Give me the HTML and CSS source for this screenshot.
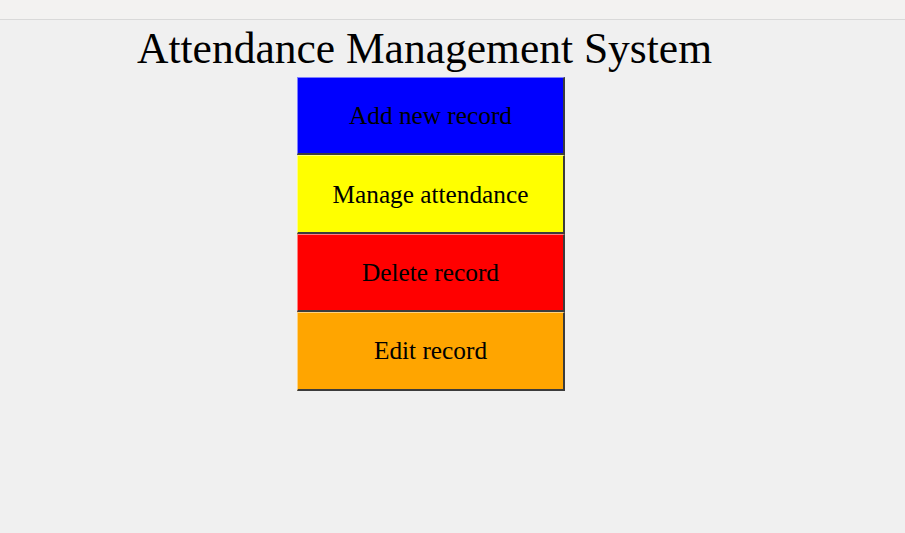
FILE: index.html
```html
<!DOCTYPE html>
<html lang="en">
<head>
<meta charset="utf-8">
<title>Attendance Management System</title>
<link rel="stylesheet" href="styles.css">
</head>
<body>
<div class="topbar"></div>
<main class="page">
  <h1 class="title">Attendance Management System</h1>
  <nav class="menu">
    <button class="btn btn-blue">Add new record</button>
    <button class="btn btn-yellow">Manage attendance</button>
    <button class="btn btn-red">Delete record</button>
    <button class="btn btn-orange">Edit record</button>
  </nav>
</main>
</body>
</html>
```
FILE: styles.css
```css
html, body {
  margin: 0;
  padding: 0;
  background: #f0f0f0;
  font-family: "Liberation Serif", "Times New Roman", serif;
  color: #000;
}

.topbar {
  height: 19px;
  background: #f3f2f1;
  border-bottom: 1px solid #d9d9d9;
}

.page {
  display: flex;
  flex-direction: column;
  align-items: flex-start;
  padding: 3px 0 0 137px;
}

.title {
  margin: 0 0 4px 0;
  font-size: 43.5px;
  font-weight: normal;
  line-height: 50px;
}

.menu {
  display: flex;
  flex-direction: column;
  margin-left: 160px;
}

.btn {
  box-sizing: border-box;
  width: 268px;
  height: 78.4px;
  margin: 0;
  padding: 0;
  font-family: "Liberation Serif", "Times New Roman", serif;
  font-size: 25.3px;
  color: #000;
  border-style: solid;
  border-width: 1px 2px 2px 1px;
  border-right-color: #3c3c3c;
  border-bottom-color: #3c3c3c;
  cursor: pointer;
}

.btn-blue {
  background: #0000ff;
  border-top-color: #8080ff;
  border-left-color: #8080ff;
}

.btn-yellow {
  background: #ffff00;
  border-top-color: #ffff80;
  border-left-color: #ffff80;
}

.btn-red {
  background: #ff0000;
  border-top-color: #ff8080;
  border-left-color: #ff8080;
}

.btn-orange {
  background: #ffa500;
  border-top-color: #ffd280;
  border-left-color: #ffd280;
}
```
